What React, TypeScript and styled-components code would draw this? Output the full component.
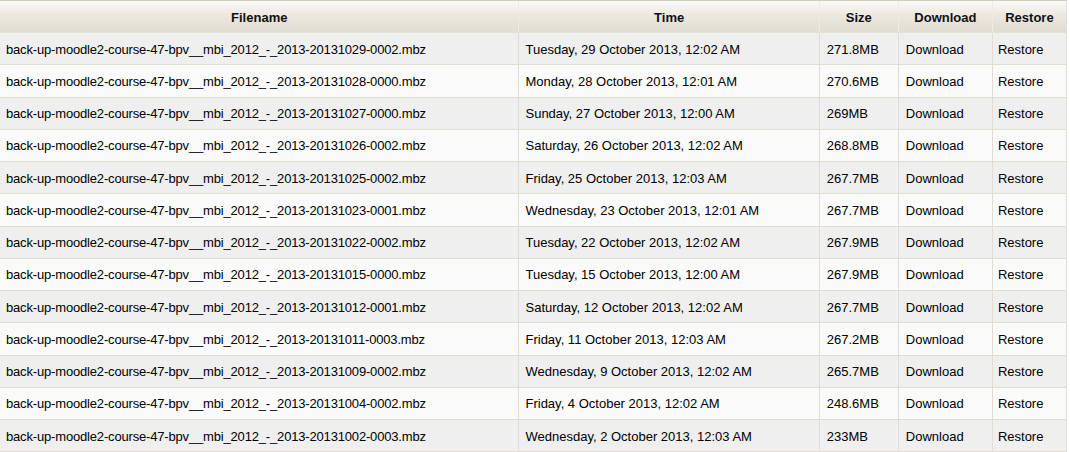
import React from "react";
import styled, { createGlobalStyle } from "styled-components";

const Global = createGlobalStyle`
  html, body { margin: 0; padding: 0; background: #ffffff; }
  body { font-family: "Liberation Sans", Arial, sans-serif; font-size: 13px; color: #000; }
`;

const Table = styled.table`
  width: 1067px;
  border-collapse: separate;
  border-spacing: 0;
  border-top: 1px solid #d3ccbd;
  border-right: 1px solid #e1ddd4;
  table-layout: fixed;
  font-family: "Liberation Sans", Arial, sans-serif;
  font-size: 13px;
`;

const HeadCell = styled.th<{ $w: number; $last?: boolean }>`
  width: ${(p) => p.$w}px;
  padding: 2px 0 0 0;
  line-height: 29px;
  font-weight: bold;
  text-align: center;
  color: #111;
  background: linear-gradient(to bottom, #fbfaf8 0%, #ece8e0 45%, #e2ddd2 100%);
  border-right: ${(p) => (p.$last ? "none" : "1px solid #eeebe5")};
  border-bottom: 1px solid #e4e0d8;
  white-space: nowrap;
`;

const Row = styled.tr<{ $odd: boolean }>`
  background: ${(p) => (p.$odd ? "#efefef" : "#fafafa")};
`;

const Cell = styled.td<{ $last?: boolean; $pad?: number; $tight?: boolean }>`
  padding: 1.5px 0 0 ${(p) => p.$pad ?? 6}px;
  line-height: 29.75px;
  border-bottom: 1px solid #e1ddd4;
  border-right: ${(p) => (p.$last ? "none" : "1px solid #e1ddd4")};
  white-space: nowrap;
  overflow: hidden;
  color: #000;
  letter-spacing: ${(p) => (p.$tight ? "-0.17px" : "0")};
`;

const rows: [string, string, string][] = [
  ["20131029-0002", "Tuesday, 29 October 2013, 12:02 AM", "271.8MB"],
  ["20131028-0000", "Monday, 28 October 2013, 12:01 AM", "270.6MB"],
  ["20131027-0000", "Sunday, 27 October 2013, 12:00 AM", "269MB"],
  ["20131026-0002", "Saturday, 26 October 2013, 12:02 AM", "268.8MB"],
  ["20131025-0002", "Friday, 25 October 2013, 12:03 AM", "267.7MB"],
  ["20131023-0001", "Wednesday, 23 October 2013, 12:01 AM", "267.7MB"],
  ["20131022-0002", "Tuesday, 22 October 2013, 12:02 AM", "267.9MB"],
  ["20131015-0000", "Tuesday, 15 October 2013, 12:00 AM", "267.9MB"],
  ["20131012-0001", "Saturday, 12 October 2013, 12:02 AM", "267.7MB"],
  ["20131011-0003", "Friday, 11 October 2013, 12:03 AM", "267.2MB"],
  ["20131009-0002", "Wednesday, 9 October 2013, 12:02 AM", "265.7MB"],
  ["20131004-0002", "Friday, 4 October 2013, 12:02 AM", "248.6MB"],
  ["20131002-0003", "Wednesday, 2 October 2013, 12:03 AM", "233MB"],
];

export default function App() {
  return (
    <>
      <Global />
      <Table>
        <thead>
          <tr>
            <HeadCell $w={518}>Filename</HeadCell>
            <HeadCell $w={299}>Time</HeadCell>
            <HeadCell $w={78}>Size</HeadCell>
            <HeadCell $w={93}>Download</HeadCell>
            <HeadCell $w={73} $last>Restore</HeadCell>
          </tr>
        </thead>
        <tbody>
          {rows.map(([id, time, size], i) => (
            <Row key={id} $odd={i % 2 === 0}>
              <Cell $tight>{`back-up-moodle2-course-47-bpv__mbi_2012_-_2013-${id}.mbz`}</Cell>
              <Cell>{time}</Cell>
              <Cell $pad={7}>{size}</Cell>
              <Cell $pad={7}>Download</Cell>
              <Cell $last $pad={5}>Restore</Cell>
            </Row>
          ))}
        </tbody>
      </Table>
    </>
  );
}
